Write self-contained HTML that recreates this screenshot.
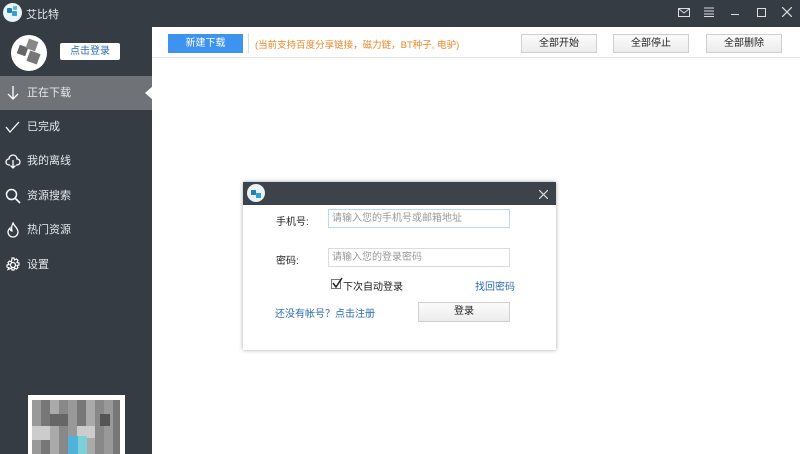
<!DOCTYPE html>
<html><head><meta charset="utf-8"><style>
*{margin:0;padding:0;box-sizing:border-box}
body{width:800px;height:454px;overflow:hidden;background:#353c44;font-family:"Liberation Sans","Noto Sans CJK SC",sans-serif;font-size:11px;position:relative}
.a{position:absolute}
.main{left:152px;top:27px;width:648px;height:427px;background:#fff}
.btn{position:absolute;border:1px solid #cfcfcf;background:linear-gradient(#fbfbfb,#ececec);font-size:10px;color:#222;text-align:center;line-height:17px;height:19px}
.nav{position:absolute;left:0;width:152px;height:34px;color:#e6e8ea;font-size:11px;line-height:34px;padding-left:27px}
.nav svg{position:absolute;left:5px;top:9px}
.inp{position:absolute;border:1px solid #d8dde2;height:19px;font-size:10px;color:#999;line-height:17px;padding-left:3px;background:#fff}
</style></head><body>
<div class="a" style="left:3px;top:3px;width:19px;height:19px;border-radius:50%;background:#e8f4f8"></div>
<div class="a" style="left:7px;top:8px;width:5px;height:5px;background:#2a7fae;border-radius:1px"></div>
<div class="a" style="left:12px;top:11px;width:5px;height:5px;background:#3aa0c8;border-radius:1px"></div>
<div class="a" style="left:13px;top:6px;width:4px;height:4px;background:#5cc0c8;border-radius:1px"></div>
<div class="a" style="left:26px;top:6px;color:#e6e8ea;font-size:11px">艾比特</div>
<svg class="a" style="left:678px;top:8px" width="12" height="10"><rect x="0.5" y="0.5" width="11" height="8" fill="none" stroke="#ddd"/><path d="M1 1l5 4 5-4" fill="none" stroke="#ddd"/></svg>
<svg class="a" style="left:704px;top:7px" width="10" height="10"><path d="M0 1h10M0 4h10M0 7h10M0 9.5h10" stroke="#ddd"/></svg>
<div class="a" style="left:731px;top:14px;width:8px;height:1px;background:#ddd"></div>
<div class="a" style="left:757px;top:8px;width:9px;height:9px;border:1px solid #ddd"></div>
<svg class="a" style="left:782px;top:7px" width="10" height="10"><path d="M0 0l10 10M10 0L0 10" stroke="#ddd" stroke-width="1.2"/></svg>
<div class="a" style="left:11px;top:35px;width:36px;height:36px;border-radius:50%;background:#fff"></div>
<div class="a" style="left:18px;top:46px;width:9px;height:9px;background:#666;transform:rotate(20deg)"></div>
<div class="a" style="left:27px;top:40px;width:10px;height:10px;background:#888;transform:rotate(20deg)"></div>
<div class="a" style="left:28px;top:52px;width:11px;height:11px;background:#777;transform:rotate(20deg)"></div>
<div class="a" style="left:60px;top:43px;width:60px;height:17px;background:#fff;border-radius:2px;color:#2b6cb0;font-size:10px;text-align:center;line-height:17px">点击登录</div>
<div class="nav" style="top:76px;background:#6f7377">正在下载<svg width="16" height="16"><path d="M8 1v13M3 9l5 5 5-5" fill="none" stroke="#fff" stroke-width="1.3"/></svg></div>
<div class="a" style="left:145px;top:86px;width:0;height:0;border-top:7px solid transparent;border-bottom:7px solid transparent;border-right:8px solid #fff"></div>
<div class="nav" style="top:110px">已完成<svg width="16" height="16"><path d="M1 8l4 5 9-10" fill="none" stroke="#fff" stroke-width="1.3"/></svg></div>
<div class="nav" style="top:144px">我的离线<svg width="16" height="16"><path d="M5 12H4a3 3 0 0 1 0-6 4 4 0 0 1 8 0 3 3 0 0 1 0 6h-1M8 7v8M5.5 12.5L8 15l2.5-2.5" fill="none" stroke="#fff" stroke-width="1.3"/></svg></div>
<div class="nav" style="top:179px">资源搜索<svg width="16" height="16"><circle cx="6.5" cy="6.5" r="5" fill="none" stroke="#fff" stroke-width="1.5"/><path d="M10 10l5 5" stroke="#fff" stroke-width="1.6"/></svg></div>
<div class="nav" style="top:213px">热门资源<svg width="16" height="16"><path d="M8 1c1 3 5 5 5 9a5 5 0 0 1-10 0c0-2 1-3 2-4 0 2 1 3 2 3-1-3 0-6 1-8z" fill="none" stroke="#fff" stroke-width="1.3"/></svg></div>
<div class="nav" style="top:248px">设置<svg width="16" height="16"><circle cx="8" cy="8" r="2.5" fill="none" stroke="#fff" stroke-width="1.3"/><path d="M7 1h2l.5 2 2-1 1.5 1.5-1 2 2 .5v2l-2 .5 1 2-1.5 1.5-2-1-.5 2H7l-.5-2-2 1L3 12.5l1-2-2-.5V8l2-.5-1-2L4.5 4l2 1z" fill="none" stroke="#fff" stroke-width="1.2"/></svg></div>
<div class="a" style="left:28px;top:395px;width:97px;height:59px;background:#fff"></div>
<div class="a" style="left:32px;top:400px;width:88px;height:54px;background:repeating-linear-gradient(90deg,#999 0 9px,#777 9px 18px,#aaa 18px 27px,#888 27px 36px);"></div>
<div class="a" style="left:50px;top:414px;width:18px;height:12px;background:#666"></div>
<div class="a" style="left:32px;top:426px;width:18px;height:14px;background:#ccc"></div>
<div class="a" style="left:77px;top:426px;width:18px;height:12px;background:#ccc"></div>
<div class="a" style="left:68px;top:436px;width:10px;height:18px;background:#4fb2d8"></div>
<div class="a" style="left:78px;top:436px;width:9px;height:18px;background:#7dd0d8"></div>
<div class="a" style="left:100px;top:414px;width:10px;height:12px;background:#555"></div>
<div class="a main"></div>
<div class="a" style="left:152px;top:57px;width:648px;height:1px;background:#e4e4e4"></div>
<div class="a" style="left:168px;top:34px;width:75px;height:19px;background:#3e92f0;color:#fff;font-size:10px;text-align:center;line-height:19px">新建下载</div>
<div class="a" style="left:248px;top:33px;width:1px;height:20px;background:#ddd"></div>
<div class="a" style="left:255px;top:37px;color:#e8882a;font-size:9.5px">(当前支持百度分享链接，磁力链，BT种子, 电驴)</div>
<div class="btn" style="left:521px;top:34px;width:76px">全部开始</div>
<div class="btn" style="left:613px;top:34px;width:76px">全部停止</div>
<div class="btn" style="left:706px;top:34px;width:76px">全部删除</div>
<div class="a" style="left:243px;top:182px;width:313px;height:168px;background:#fff;box-shadow:0 0 4px rgba(0,0,0,.35)"></div>
<div class="a" style="left:243px;top:182px;width:313px;height:23px;background:#3c434b"></div>
<div class="a" style="left:247px;top:184px;width:18px;height:18px;border-radius:50%;background:#e8f4f8"></div>
<div class="a" style="left:251px;top:190px;width:5px;height:5px;background:#2a7fae"></div>
<div class="a" style="left:256px;top:193px;width:5px;height:5px;background:#3aa0c8"></div>
<svg class="a" style="left:539px;top:190px" width="9" height="9"><path d="M0 0l9 9M9 0L0 9" stroke="#ddd" stroke-width="1.2"/></svg>
<div class="a" style="left:276px;top:213px;font-size:10px;color:#222">手机号:</div>
<div class="inp" style="left:328px;top:209px;width:182px;border-color:#bcd6ee">请输入您的手机号或邮箱地址</div>
<div class="a" style="left:276px;top:252px;font-size:10px;color:#222">密码:</div>
<div class="inp" style="left:328px;top:248px;width:182px">请输入您的登录密码</div>
<div class="a" style="left:331px;top:279px;width:10px;height:10px;border:1px solid #777;background:#fff"></div>
<svg class="a" style="left:331px;top:277px" width="12" height="12"><path d="M2 6l3 4 6-9" fill="none" stroke="#222" stroke-width="1.5"/></svg>
<div class="a" style="left:343px;top:278px;font-size:10px;color:#222">下次自动登录</div>
<div class="a" style="left:475px;top:278px;font-size:10px;color:#2b6cb0">找回密码</div>
<div class="a" style="left:275px;top:305px;font-size:10px;color:#2b6cb0">还没有帐号？点击注册</div>
<div class="btn" style="left:418px;top:302px;width:92px;height:20px;line-height:18px">登录</div>
</body></html>
